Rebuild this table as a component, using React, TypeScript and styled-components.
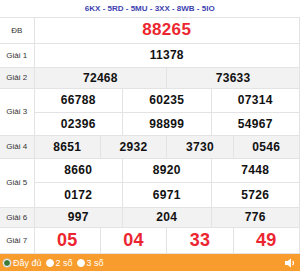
import React from 'react';
import styled, { createGlobalStyle } from 'styled-components';

const GlobalStyle = createGlobalStyle`
  body {
    margin: 0;
    background: #fff;
    font-family: 'Liberation Sans', Arial, sans-serif;
  }
`;

const Wrap = styled.div`
  width: 300px;
  height: 271px;
  overflow: hidden;
  display: flex;
  flex-direction: column;
`;

const Table = styled.table`
  width: 300px;
  border-collapse: collapse;
  table-layout: fixed;
  flex: none;
`;

const Row = styled.tr<{ $shade?: boolean; $h: number }>`
  height: ${(p) => p.$h}px;
  background: ${(p) => (p.$shade ? '#f2f2f2' : '#fff')};
`;

const Label = styled.td`
  width: 34px;
  border: 1px solid #e3e3e3;
  border-left: none;
  font-size: 8px;
  color: #333;
  text-align: center;
  padding: 0;
`;

const Cell = styled.td<{ $red?: boolean; $size: number }>`
  border: 1px solid #e3e3e3;
  text-align: center;
  padding: 0;
  font-weight: bold;
  font-size: ${(p) => p.$size}px;
  color: ${(p) => (p.$red ? '#ec2630' : '#111')};
  letter-spacing: 0.3px;
`;

const HeadCell = styled.td`
  border-bottom: 1px solid #e3e3e3;
  text-align: center;
  font-size: 8px;
  font-weight: bold;
  color: #3d3fb0;
  padding: 0;
`;

const Footer = styled.div`
  height: 18px;
  flex: none;
  margin-top: auto;
  background: #f89c2e;
  display: flex;
  align-items: center;
  padding: 0 4px 0 3px;
  gap: 4px;
  color: #fff;
  font-size: 9px;
`;

const Option = styled.label`
  display: flex;
  align-items: center;
  gap: 2px;
`;

const Radio = styled.span<{ $on?: boolean }>`
  width: 8px;
  height: 8px;
  border-radius: 50%;
  background: ${(p) => (p.$on ? '#3d7a3d' : '#fff')};
  border: 1.5px solid #fff;
  box-sizing: border-box;
  box-shadow: ${(p) => (p.$on ? '0 0 0 0.5px #ccc' : 'none')};
`;

const Spacer = styled.div`
  flex: 1;
`;

type Prize = { label: string; rows: string[][]; shade?: boolean; h: number[]; red?: boolean; size: number };

const prizes: Prize[] = [
  { label: 'ĐB', rows: [['88265']], h: [26], red: true, size: 17 },
  { label: 'Giải 1', rows: [['11378']], h: [24], size: 12 },
  { label: 'Giải 2', rows: [['72468', '73633']], h: [21], shade: true, size: 12 },
  { label: 'Giải 3', rows: [['66788', '60235', '07314'], ['02396', '98899', '54967']], h: [24, 23], size: 12 },
  { label: 'Giải 4', rows: [['8651', '2932', '3730', '0546']], h: [23], shade: true, size: 12 },
  { label: 'Giải 5', rows: [['8660', '8920', '7448'], ['0172', '6971', '5726']], h: [24, 25], size: 12 },
  { label: 'Giải 6', rows: [['997', '204', '776']], h: [20], shade: true, size: 12 },
  { label: 'Giải 7', rows: [['05', '04', '33', '49']], h: [26], red: true, size: 18 },
];

const Speaker = () => (
  <svg width="11" height="10" viewBox="0 0 11 10">
    <path d="M0 3h2.5L6 0.5v9L2.5 7H0z" fill="#fff" />
    <path d="M7.5 3a2.5 2.5 0 0 1 0 4" stroke="#fff" strokeWidth="1.2" fill="none" />
  </svg>
);

export default function App() {
  return (
    <Wrap>
      <GlobalStyle />
      <Table>
        <colgroup>
          <col style={{ width: 34 }} />
          {Array.from({ length: 12 }).map((_, i) => (
            <col key={i} />
          ))}
        </colgroup>
        <tbody>
          <Row $h={17}>
            <HeadCell colSpan={13}>6KX - 5RD - 5MU - 3XX - 8WB - 5IO</HeadCell>
          </Row>
          {prizes.map((p) =>
            p.rows.map((r, ri) => (
              <Row key={p.label + ri} $h={p.h[ri]} $shade={p.shade}>
                {ri === 0 && <Label rowSpan={p.rows.length}>{p.label}</Label>}
                {r.map((n) => (
                  <Cell key={n} colSpan={12 / r.length} $red={p.red} $size={p.size}>
                    {n}
                  </Cell>
                ))}
              </Row>
            ))
          )}
        </tbody>
      </Table>
      <Footer>
        <Option>
          <Radio $on />
          Đầy đủ
        </Option>
        <Option>
          <Radio />2 số
        </Option>
        <Option>
          <Radio />3 số
        </Option>
        <Spacer />
        <Speaker />
      </Footer>
    </Wrap>
  );
}
